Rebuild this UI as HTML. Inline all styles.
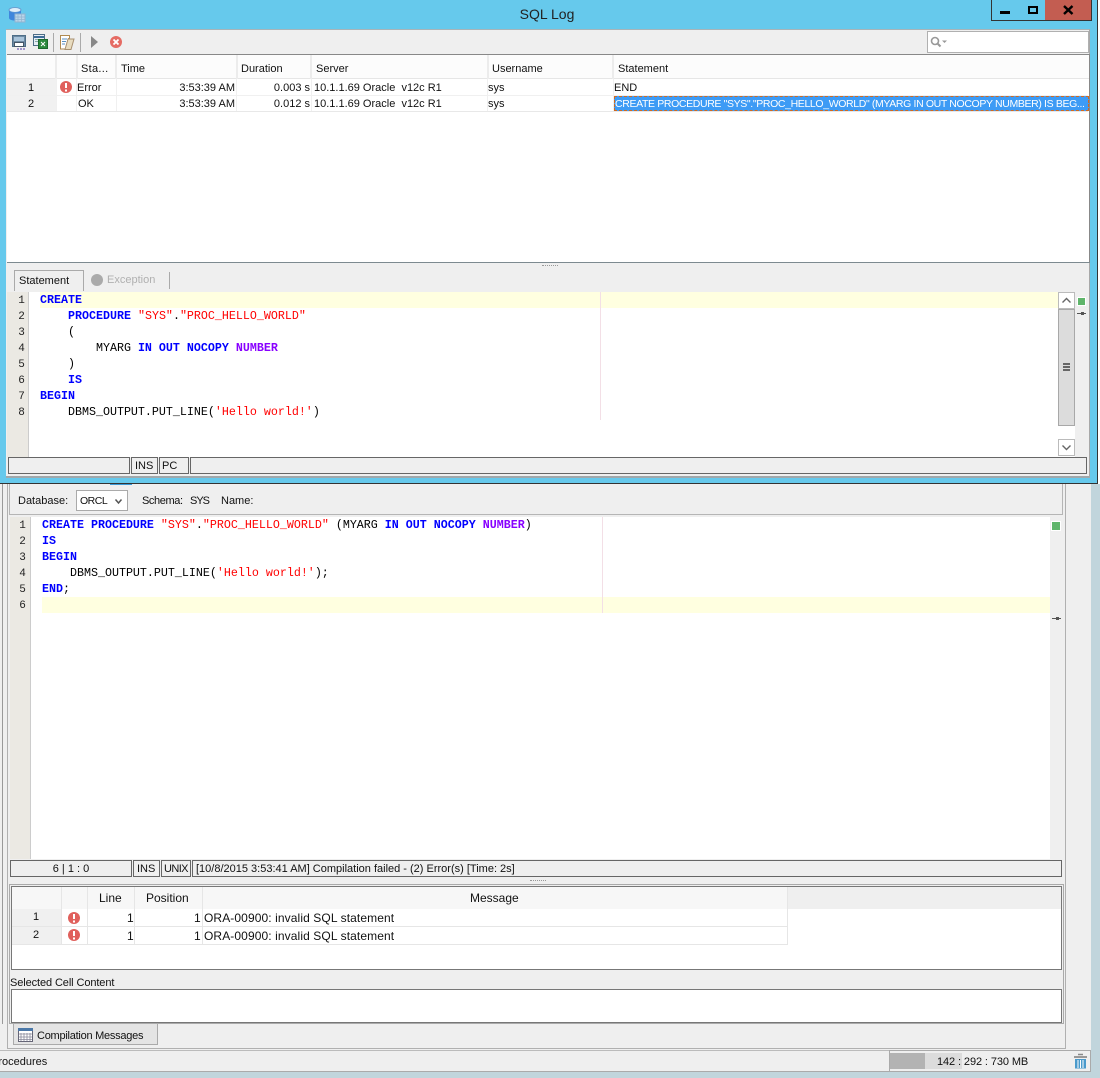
<!DOCTYPE html>
<html><head><meta charset="utf-8"><title>SQL Log</title>
<style>
html,body{margin:0;padding:0;width:1100px;height:1078px;overflow:hidden;background:#fff}
body{position:relative;font:11px/14px "Liberation Sans",sans-serif;color:#111}
.a,.t,.c{position:absolute}
.a{box-sizing:border-box}
.t{white-space:pre;height:14px;line-height:14px;margin-top:1px}
.m{margin-top:0}
.r{text-align:right}
.c{font:11.67px/16px "Liberation Mono",monospace;white-space:pre;color:#000;height:16px}
.k{color:#00f;font-weight:bold}.s{color:#f00}.p{color:#80f;font-weight:bold}
.n{position:absolute;font:11px/16px "Liberation Mono",monospace;text-align:center;color:#222;height:16px;margin-top:1px}
.st{position:absolute;box-sizing:border-box;border:1px solid #666;background:#efefef;height:17px;line-height:16px;padding-left:3px;white-space:pre}
.ic{position:absolute}
</style></head><body>
<!-- lower window background -->
<div class="a" style="left:0;top:484px;width:1100px;height:594px;background:#efefef"></div>
<div class="a" style="left:1091px;top:484px;width:9px;height:594px;background:#c1d5dc"></div>
<div class="a" style="left:0;top:1072px;width:1100px;height:6px;background:#c1d5dc"></div>
<div class="a" style="left:0;top:484px;width:3px;height:540px;border-right:1px solid #999"></div>
<div class="a" style="left:7px;top:484px;width:1059px;height:565px;border:1px solid #b0b0b0;border-top:0"></div>
<div class="a" style="left:110px;top:484px;width:22px;height:1px;background:#3d9ad6"></div>
<div class="a" style="left:9px;top:484px;width:1054px;height:31px;border:1px solid #b5b5b5;border-top:0"></div>
<div class="t" style="left:18px;top:493px">Database:</div>
<div class="a" style="left:76px;top:490px;width:52px;height:21px;background:#fff;border:1px solid #aaa"></div>
<div class="t" style="left:80px;top:493px;font-size:10.5px;letter-spacing:-.5px">ORCL</div>
<svg class="ic" style="left:114px;top:498px" width="10" height="7"><path d="M1.500 1.500 L4.500 5 L7.500 1.500" fill="none" stroke="#555" stroke-width="1.500"/></svg>
<div class="t" style="left:142px;top:493px;letter-spacing:-.4px">Schema:</div>
<div class="t" style="left:190px;top:493px;letter-spacing:-1px">SYS</div>
<div class="t" style="left:221px;top:493px">Name:</div>
<!-- lower editor -->
<div class="a" style="left:10px;top:517px;width:1040px;height:342px;background:#fff"></div>
<div class="a" style="left:10px;top:517px;width:21px;height:342px;background:#ebe9e3;border-right:1px solid #ccc"></div>
<div class="a" style="left:42px;top:597px;width:1008px;height:16px;background:#ffffe0"></div>
<div class="a" style="left:602px;top:517px;width:1px;height:96px;background:#f3dfe6"></div>
<div class="n" style="left:10px;top:517px;width:25px">1</div>
<div class="n" style="left:10px;top:533px;width:25px">2</div>
<div class="n" style="left:10px;top:549px;width:25px">3</div>
<div class="n" style="left:10px;top:565px;width:25px">4</div>
<div class="n" style="left:10px;top:581px;width:25px">5</div>
<div class="n" style="left:10px;top:597px;width:25px">6</div>
<div class="c" style="left:42px;top:517px"><span class="k">CREATE PROCEDURE</span> <span class="s">"SYS"</span>.<span class="s">"PROC_HELLO_WORLD"</span> (MYARG <span class="k">IN OUT NOCOPY</span> <span class="p">NUMBER</span>)</div>
<div class="c" style="left:42px;top:533px"><span class="k">IS</span></div>
<div class="c" style="left:42px;top:549px"><span class="k">BEGIN</span></div>
<div class="c" style="left:42px;top:565px">    DBMS_OUTPUT.PUT_LINE(<span class="s">'Hello world!'</span>);</div>
<div class="c" style="left:42px;top:581px"><span class="k">END</span>;</div>
<div class="a" style="left:1052px;top:522px;width:8px;height:8px;background:#5fb56b;outline:1px solid #fff"></div>
<svg class="ic" style="left:1052px;top:615px" width="10" height="7"><path d="M0 3.500H9" stroke="#555"/><rect x="4" y="2" width="3" height="3" fill="#555"/></svg>
<!-- lower status -->
<div class="st" style="left:10px;top:860px;width:122px;text-align:center;padding:0">6 | 1 : 0</div>
<div class="st" style="left:133px;top:860px;width:27px">INS</div>
<div class="st" style="left:161px;top:860px;width:30px;padding-left:2px;letter-spacing:-.6px">UNIX</div>
<div class="st" style="left:192px;top:860px;width:870px">[10/8/2015 3:53:41 AM] Compilation failed - (2) Error(s) [Time: 2s]</div>
<div class="a" style="left:530px;top:880px;width:16px;height:2px;border-top:1px dotted #999"></div>
<!-- messages -->
<div class="a" style="left:9px;top:884px;width:1055px;height:140px;border:1px solid #aaa"></div>
<div class="a" style="left:11px;top:886px;width:1051px;height:84px;background:#fff;border:1px solid #777"></div>
<div class="a" style="left:12px;top:887px;width:1049px;height:22px;background:#efefef"></div>
<div class="a" style="left:12px;top:887px;width:776px;height:22px;background:#f7f7f7"></div>
<div class="a" style="left:12px;top:909px;width:50px;height:36px;background:#f0f0f0"></div>
<div class="a" style="left:12px;top:926px;width:776px;height:1px;background:#e6e6e6"></div>
<div class="a" style="left:12px;top:944px;width:776px;height:1px;background:#e6e6e6"></div>
<div class="a" style="left:61px;top:887px;width:1px;height:58px;background:#e6e6e6"></div>
<div class="a" style="left:87px;top:887px;width:1px;height:58px;background:#e6e6e6"></div>
<div class="a" style="left:134px;top:887px;width:1px;height:58px;background:#e6e6e6"></div>
<div class="a" style="left:202px;top:887px;width:1px;height:58px;background:#e6e6e6"></div>
<div class="a" style="left:787px;top:887px;width:1px;height:58px;background:#e6e6e6"></div>
<div class="t m" style="left:99px;top:891px;font-size:12px">Line</div>
<div class="t m" style="left:146px;top:891px;font-size:12px">Position</div>
<div class="t m" style="left:470px;top:891px;font-size:12px">Message</div>
<div class="t m" style="left:33px;top:910px">1</div><div class="t m" style="left:33px;top:928px">2</div>
<div class="t m" style="left:127px;top:911px;font-size:12px">1</div><div class="t m" style="left:127px;top:929px;font-size:12px">1</div>
<div class="t m" style="left:194px;top:911px;font-size:12px">1</div><div class="t m" style="left:194px;top:929px;font-size:12px">1</div>
<div class="t m" style="left:204px;top:911px;font-size:12px;letter-spacing:.1px">ORA-00900: invalid SQL statement</div>
<div class="t m" style="left:204px;top:929px;font-size:12px;letter-spacing:.1px">ORA-00900: invalid SQL statement</div>
<svg class="ic" style="left:67px;top:911px" width="14" height="14"><circle cx="7" cy="7" r="6" fill="#e0605c"/><path d="M7 3v5" stroke="#fff" stroke-width="2"/><path d="M7 9.500v2" stroke="#fff" stroke-width="2"/></svg>
<svg class="ic" style="left:67px;top:928px" width="14" height="14"><circle cx="7" cy="7" r="6" fill="#e0605c"/><path d="M7 3v5" stroke="#fff" stroke-width="2"/><path d="M7 9.500v2" stroke="#fff" stroke-width="2"/></svg>
<div class="t" style="left:10px;top:975px;letter-spacing:-.1px">Selected Cell Content</div>
<div class="a" style="left:11px;top:989px;width:1051px;height:34px;background:#fff;border:1px solid #777"></div>
<div class="a" style="left:13px;top:1024px;width:145px;height:21px;background:#e4e4e4;border:1px solid #aaa;border-top:0"></div>
<svg class="ic" style="left:18px;top:1028px" width="16" height="15"><rect x=".5" y=".5" width="14" height="13" fill="#fff" stroke="#667"/><rect x="0" y="0" width="15" height="3" fill="#4b78a8"/><path d="M3 5v8M6 5v8M9 5v8M12 5v8M1 6h13M1 9h13M1 11.500h13" stroke="#889" stroke-width=".8"/></svg>
<div class="t" style="left:37px;top:1028px;letter-spacing:-.25px">Compilation Messages</div>
<!-- bottom status bar -->
<div class="a" style="left:0;top:1050px;width:1091px;height:22px;border-top:1px solid #bbb;border-bottom:1px solid #aaa"></div>
<div class="t" style="left:-9px;top:1054px">Procedures</div>
<div class="a" style="left:889px;top:1050px;width:202px;height:22px;border:1px solid #aaa"></div>
<div class="a" style="left:890px;top:1053px;width:72px;height:16px;background:#dcdcdc"></div>
<div class="a" style="left:890px;top:1053px;width:35px;height:16px;background:#b3b3b3"></div>
<div class="t" style="left:937px;top:1054px;letter-spacing:-.1px">142 : 292 : 730 MB</div>
<svg class="ic" style="left:1073px;top:1052px" width="16" height="18"><path d="M5 2.500h5" stroke="#888" stroke-width="1.500"/><rect x="1" y="4" width="13" height="2" fill="#999"/><path d="M2 7h11v9.500H2z" fill="#4a9acb"/><path d="M5 8v8M7.500 8v8M10 8v8" stroke="#fff"/></svg>

<!-- SQL Log window -->
<div class="a" style="left:0;top:0;width:1098px;height:484px;background:#66c9ec;border-right:1px solid #333;border-bottom:1px solid #333"></div>
<svg class="ic" style="left:8px;top:6px" width="18" height="17"><ellipse cx="7" cy="4" rx="6" ry="2.500" fill="#dfeefa" stroke="#6a9fd0"/><path d="M1 4v8c0 1.500 3 2.500 6 2.500s6-1 6-2.500V4c0 1.500-3 2.500-6 2.500S1 5.500 1 4z" fill="#3f86dc"/><rect x="7" y="8" width="10" height="8" fill="#b9d5ea" stroke="#93b4cf"/><path d="M10 8v8M13.500 8v8M7 11h10M7 13.500h10" stroke="#93b4cf" stroke-width=".7"/></svg>
<div class="t m" style="left:0;top:6px;width:1094px;text-align:center;font-size:14px;line-height:16px;height:16px;color:#222">SQL Log</div>
<div class="a" style="left:991px;top:0;width:27px;height:21px;border:1px solid #333;border-top:0;background:#66c9ec"></div>
<div class="a" style="left:1017px;top:0;width:29px;height:21px;border:1px solid #333;border-top:0;border-left:0;background:#66c9ec"></div>
<div class="a" style="left:1045px;top:0;width:47px;height:21px;background:#c35d51;border:1px solid #333;border-top:0;border-left:0"></div>
<div class="a" style="left:1000px;top:11px;width:10px;height:3px;background:#000"></div>
<div class="a" style="left:1028px;top:6px;width:10px;height:8px;border:2px solid #000"></div>
<svg class="ic" style="left:1063px;top:5px" width="11" height="10"><path d="M1 1L9.500 9M9.500 1L1 9" stroke="#000" stroke-width="2.400"/></svg>
<!-- dialog -->
<div class="a" style="left:6px;top:29px;width:1084px;height:449px;background:#efefef;border-top:1px solid #a8b4b8;border-right:1px solid #a8a8a8;border-bottom:2px solid #a0a8ab"></div>
<!-- toolbar -->
<svg class="ic" style="left:12px;top:35px" width="15" height="16"><rect x=".5" y=".5" width="13" height="11" fill="#6d8aa3" stroke="#4e6e87"/><rect x="2" y="2" width="10" height="4" fill="#a9c4da"/><rect x="2.500" y="7.500" width="9" height="4" fill="#fff" stroke="#456"/><path d="M5 14h2M8 14h2M11 14h2" stroke="#8878c0" stroke-width="1.500"/></svg>
<svg class="ic" style="left:33px;top:34px" width="16" height="16"><rect x=".5" y=".5" width="11" height="11" fill="#e8eef5" stroke="#4e6e87"/><path d="M1 3h10" stroke="#3d6d99" stroke-width="2"/><path d="M2 5.500h8M2 7.500h4" stroke="#8aa" /><rect x="5.500" y="5.500" width="9" height="9" fill="#2d8a3e" stroke="#1d6a2e"/><path d="M8 8l4 4M12 8l-4 4" stroke="#fff"/></svg>
<div class="a" style="left:53px;top:33px;width:1px;height:19px;background:#aaa"></div>
<svg class="ic" style="left:60px;top:35px" width="15" height="15"><path d="M.5 .5h9v3h-1l-3 10.500h-5z" fill="#fff" stroke="#b08a50"/><path d="M2 4h5M2 6.500h4M2 9h3" stroke="#5a8fc0"/><path d="M8 4h6l-3 10.500H5z" fill="#e8dcc0" stroke="#a89070"/></svg>
<div class="a" style="left:80px;top:33px;width:1px;height:19px;background:#aaa"></div>
<svg class="ic" style="left:90px;top:36px" width="9" height="12"><path d="M1 0L8 6L1 12z" fill="#888"/></svg>
<svg class="ic" style="left:109px;top:35px" width="14" height="14"><circle cx="7" cy="7" r="6" fill="#e56b63"/><path d="M4.500 4.500l5 5M9.500 4.500l-5 5" stroke="#fff" stroke-width="1.800"/></svg>
<div class="a" style="left:927px;top:31px;width:162px;height:22px;background:#fff;border:1px solid #b0b0b0"></div>
<svg class="ic" style="left:930px;top:36px" width="18" height="12"><circle cx="5" cy="5" r="3.500" fill="none" stroke="#999" stroke-width="1.600"/><path d="M7.500 7.500L10.500 10.500" stroke="#999" stroke-width="2"/><path d="M12 4.500h5l-2.500 2.500z" fill="#999"/></svg>
<!-- grid -->
<div class="a" style="left:7px;top:54px;width:1083px;height:209px;background:#fff;border-top:1px solid #888;border-bottom:1px solid #7d8a90;border-right:1px solid #888"></div>
<div class="a" style="left:7px;top:55px;width:1082px;height:24px;background:#fcfcfc;border-bottom:1px solid #e6e6e6"></div>
<div class="a" style="left:7px;top:79px;width:49px;height:32px;background:#f1f1f1"></div>
<div class="a" style="left:7px;top:95px;width:1081px;height:1px;background:#f0f0f0"></div>
<div class="a" style="left:7px;top:111px;width:1081px;height:1px;background:#e8e8e8"></div>
<div class="a" style="left:55px;top:55px;width:2px;height:24px;background:#ececec"></div>
<div class="a" style="left:76px;top:55px;width:2px;height:24px;background:#ececec"></div>
<div class="a" style="left:115px;top:55px;width:2px;height:24px;background:#ececec"></div>
<div class="a" style="left:236px;top:55px;width:2px;height:24px;background:#ececec"></div>
<div class="a" style="left:310px;top:55px;width:2px;height:24px;background:#ececec"></div>
<div class="a" style="left:487px;top:55px;width:2px;height:24px;background:#ececec"></div>
<div class="a" style="left:612px;top:55px;width:2px;height:24px;background:#ececec"></div>
<div class="a" style="left:56px;top:79px;width:1px;height:32px;background:#f0f0f0"></div>
<div class="a" style="left:76px;top:79px;width:1px;height:32px;background:#f0f0f0"></div>
<div class="a" style="left:116px;top:79px;width:1px;height:32px;background:#f0f0f0"></div>
<div class="a" style="left:236px;top:79px;width:1px;height:32px;background:#f0f0f0"></div>
<div class="a" style="left:311px;top:79px;width:1px;height:32px;background:#f0f0f0"></div>
<div class="a" style="left:487px;top:79px;width:1px;height:32px;background:#f0f0f0"></div>
<div class="a" style="left:613px;top:79px;width:1px;height:32px;background:#f0f0f0"></div>
<div class="t" style="left:81px;top:61px;letter-spacing:.3px">Sta...</div>
<div class="t" style="left:121px;top:61px">Time</div>
<div class="t" style="left:241px;top:61px">Duration</div>
<div class="t" style="left:316px;top:61px">Server</div>
<div class="t" style="left:492px;top:61px">Username</div>
<div class="t" style="left:618px;top:61px">Statement</div>
<div class="t" style="left:28px;top:80px">1</div><div class="t" style="left:28px;top:96px">2</div>
<svg class="ic" style="left:59px;top:80px" width="14" height="14"><circle cx="7" cy="7" r="6" fill="#e0605c"/><path d="M7 3v5" stroke="#fff" stroke-width="2"/><path d="M7 9.500v2" stroke="#fff" stroke-width="2"/></svg>
<div class="t" style="left:77px;top:80px">Error</div><div class="t" style="left:78px;top:96px">OK</div>
<div class="t r" style="left:117px;top:80px;width:118px">3:53:39 AM</div><div class="t r" style="left:117px;top:96px;width:118px">3:53:39 AM</div>
<div class="t r" style="left:238px;top:80px;width:72px">0.003 s</div><div class="t r" style="left:238px;top:96px;width:72px">0.012 s</div>
<div class="t" style="left:314px;top:80px">10.1.1.69 Oracle  v12c R1</div><div class="t" style="left:314px;top:96px">10.1.1.69 Oracle  v12c R1</div>
<div class="t" style="left:488px;top:80px">sys</div><div class="t" style="left:488px;top:96px">sys</div>
<div class="t" style="left:614px;top:80px">END</div>
<div class="a" style="left:614px;top:96px;width:475px;height:15px;background:#3d9bf5;border:1px dashed #d2691e"></div>
<div class="t" style="left:615px;top:96px;color:#fff;font-size:10.5px;letter-spacing:-.36px">CREATE PROCEDURE "SYS"."PROC_HELLO_WORLD" (MYARG IN OUT NOCOPY NUMBER) IS BEG...</div>
<!-- tabs -->
<div class="a" style="left:542px;top:265px;width:16px;height:2px;border-top:1px dotted #999"></div>
<div class="a" style="left:14px;top:270px;width:70px;height:21px;border:1px solid #aaa;border-bottom:0;background:#efefef"></div>
<div class="t" style="left:19px;top:273px">Statement</div>
<svg class="ic" style="left:91px;top:274px" width="12" height="12"><circle cx="6" cy="6" r="6" fill="#aaa"/></svg>
<div class="t" style="left:107px;top:272px;color:#b0b0b0">Exception</div>
<div class="a" style="left:169px;top:272px;width:1px;height:17px;background:#aaa"></div>
<!-- upper editor -->
<div class="a" style="left:7px;top:292px;width:1051px;height:165px;background:#fff"></div>
<div class="a" style="left:7px;top:292px;width:22px;height:165px;background:#ebe9e3;border-right:1px solid #ccc"></div>
<div class="a" style="left:40px;top:292px;width:1018px;height:16px;background:#ffffe0"></div>
<div class="a" style="left:600px;top:292px;width:1px;height:128px;background:#f3dfe6"></div>
<div class="n" style="left:8px;top:292px;width:27px">1</div>
<div class="n" style="left:8px;top:308px;width:27px">2</div>
<div class="n" style="left:8px;top:324px;width:27px">3</div>
<div class="n" style="left:8px;top:340px;width:27px">4</div>
<div class="n" style="left:8px;top:356px;width:27px">5</div>
<div class="n" style="left:8px;top:372px;width:27px">6</div>
<div class="n" style="left:8px;top:388px;width:27px">7</div>
<div class="n" style="left:8px;top:404px;width:27px">8</div>
<div class="c" style="left:40px;top:292px"><span class="k">CREATE</span></div>
<div class="c" style="left:40px;top:308px">    <span class="k">PROCEDURE</span> <span class="s">"SYS"</span>.<span class="s">"PROC_HELLO_WORLD"</span></div>
<div class="c" style="left:40px;top:324px">    (</div>
<div class="c" style="left:40px;top:340px">        MYARG <span class="k">IN OUT NOCOPY</span> <span class="p">NUMBER</span></div>
<div class="c" style="left:40px;top:356px">    )</div>
<div class="c" style="left:40px;top:372px">    <span class="k">IS</span></div>
<div class="c" style="left:40px;top:388px"><span class="k">BEGIN</span></div>
<div class="c" style="left:40px;top:404px">    DBMS_OUTPUT.PUT_LINE(<span class="s">'Hello world!'</span>)</div>
<!-- scrollbar -->
<div class="a" style="left:1058px;top:292px;width:17px;height:165px;background:#fff"></div>
<div class="a" style="left:1058px;top:292px;width:17px;height:17px;background:#fff;border:1px solid #bbb"></div>
<svg class="ic" style="left:1061px;top:297px" width="11" height="7"><path d="M1.500 5.500L5.500 1.500L9.500 5.500" fill="none" stroke="#666" stroke-width="1.400"/></svg>
<div class="a" style="left:1058px;top:309px;width:17px;height:117px;background:#dcdcdc;border:1px solid #a8a8a8"></div>
<div class="a" style="left:1063px;top:363px;width:7px;height:2px;background:#666"></div>
<div class="a" style="left:1063px;top:366px;width:7px;height:2px;background:#666"></div>
<div class="a" style="left:1063px;top:369px;width:7px;height:2px;background:#666"></div>
<div class="a" style="left:1058px;top:439px;width:17px;height:17px;background:#fff;border:1px solid #bbb"></div>
<svg class="ic" style="left:1061px;top:444px" width="11" height="7"><path d="M1.500 1.500L5.500 5.500L9.500 1.500" fill="none" stroke="#666" stroke-width="1.400"/></svg>
<div class="a" style="left:1078px;top:298px;width:7px;height:7px;background:#5fb56b;outline:1px solid #fff"></div>
<svg class="ic" style="left:1077px;top:310px" width="10" height="7"><path d="M0 3.500H9" stroke="#555"/><rect x="4" y="2" width="3" height="3" fill="#555"/></svg>
<!-- upper status -->
<div class="st" style="left:8px;top:457px;width:122px"></div>
<div class="st" style="left:131px;top:457px;width:27px">INS</div>
<div class="st" style="left:159px;top:457px;width:30px;padding-left:2px">PC</div>
<div class="st" style="left:190px;top:457px;width:897px"></div>
</body></html>
